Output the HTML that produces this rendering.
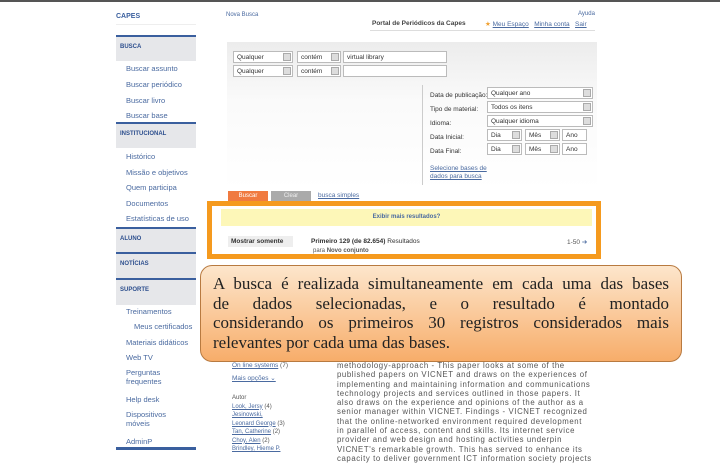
<!DOCTYPE html>
<html><head><meta charset="utf-8"><style>
*{margin:0;padding:0;box-sizing:border-box}
body{width:720px;height:450px;overflow:hidden;background:#fff;font-family:"Liberation Sans",sans-serif;font-size:7px;color:#555;position:relative}
.a{position:absolute;white-space:nowrap}
.hd{position:absolute;left:116px;width:80px;background:#e6e7ea;border-top:2px solid #3a5f9e;color:#2d4f8e;font-weight:bold;font-size:6px;padding:7px 4px}
.it{position:absolute;left:126px;color:#4a6aa0;font-size:7.5px}
.sep{position:absolute;left:116px;width:80px;border-top:1px solid #eee}
.sel{position:absolute;height:12px;border:1px solid #bbb;background:#fff;font-size:6.5px;padding:2px 3px;color:#333}
.sel i{position:absolute;right:1px;top:1px;width:8px;height:8px;background:#ddd;border:1px solid #aaa}
.lk{color:#4a6aa0;text-decoration:underline}
.cl div{text-align:justify;text-align-last:justify;height:19.5px;white-space:nowrap}
.cl div.l{text-align-last:left}
</style></head><body>
<div class="a" style="left:0;top:0;width:720px;height:2px;background:#555"></div>
<div class="a" style="left:116px;top:13px;color:#3a5f9e;font-weight:bold;font-size:7px">CAPES</div>
<div class="sep" style="top:24px"></div>
<div class="hd" style="top:35px;height:26px">BUSCA</div>
<div class="it" style="top:64px">Buscar assunto</div><div class="it" style="top:80px">Buscar periódico</div><div class="it" style="top:96px">Buscar livro</div><div class="it" style="top:111px">Buscar base</div>
<div class="hd" style="top:122px;height:26px">INSTITUCIONAL</div>
<div class="it" style="top:152px">Histórico</div><div class="it" style="top:168px">Missão e objetivos</div><div class="it" style="top:183px">Quem participa</div><div class="it" style="top:199px">Documentos</div><div class="it" style="top:214px">Estatísticas de uso</div>
<div class="hd" style="top:227px;height:25px">ALUNO</div>
<div class="hd" style="top:252px;height:26px">NOTÍCIAS</div>
<div class="hd" style="top:278px;height:27px">SUPORTE</div>
<div class="it" style="top:307px">Treinamentos</div><div class="it" style="top:322px;left:134px">Meus certificados</div><div class="it" style="top:338px">Materiais didáticos</div><div class="it" style="top:353px">Web TV</div><div class="it" style="top:368px;line-height:9px">Perguntas<br>frequentes</div><div class="it" style="top:395px">Help desk</div><div class="it" style="top:410px;line-height:9px">Dispositivos<br>móveis</div><div class="it" style="top:437px">AdminP</div>
<div class="a" style="left:116px;top:447px;width:80px;height:3px;background:#3a5f9e"></div>

<div class="a" style="left:226px;top:12px;color:#4a6aa0;font-size:6px">Nova Busca</div>
<div class="a" style="left:578px;top:11px;color:#4a6aa0;font-size:6px">Ayuda</div>
<div class="a" style="left:372px;top:20px;color:#444;font-weight:bold;font-size:6.5px">Portal de Periódicos da Capes</div>
<div class="a" style="left:485px;top:20px;font-size:6.5px"><span style="color:#f0a030">★</span> <span class="lk">Meu Espaço</span> &nbsp; <span class="lk">Minha conta</span> &nbsp; <span class="lk">Sair</span></div>
<div class="a" style="left:370px;top:30px;width:225px;border-top:1px solid #ddd"></div>
<div class="a" style="left:227px;top:42px;width:370px;height:148px;background:linear-gradient(#ececec,#fafafa 40%,#fff)"></div>
<div class="sel" style="left:233px;top:51px;width:60px">Qualquer<i></i></div>
<div class="sel" style="left:297px;top:51px;width:44px">contém<i></i></div>
<div class="sel" style="left:343px;top:51px;width:104px">virtual library</div>
<div class="sel" style="left:233px;top:65px;width:60px">Qualquer<i></i></div>
<div class="sel" style="left:297px;top:65px;width:44px">contém<i></i></div>
<div class="sel" style="left:343px;top:65px;width:104px"></div>
<div class="a" style="left:422px;top:85px;height:100px;border-left:1px solid #ccc"></div>
<div class="a" style="left:430px;top:89px;color:#333;font-size:6.5px;line-height:14px">Data de publicação:<br>Tipo de material:<br>Idioma:<br>Data Inicial:<br>Data Final:</div>
<div class="sel" style="left:487px;top:87px;width:106px">Qualquer ano<i></i></div>
<div class="sel" style="left:487px;top:101px;width:106px">Todos os itens<i></i></div>
<div class="sel" style="left:487px;top:115px;width:106px">Qualquer idioma<i></i></div>
<div class="sel" style="left:487px;top:129px;width:35px">Dia<i></i></div><div class="sel" style="left:525px;top:129px;width:35px">Mês<i></i></div><div class="sel" style="left:562px;top:129px;width:25px">Ano</div>
<div class="sel" style="left:487px;top:143px;width:35px">Dia<i></i></div><div class="sel" style="left:525px;top:143px;width:35px">Mês<i></i></div><div class="sel" style="left:562px;top:143px;width:25px">Ano</div>
<div class="a lk" style="left:430px;top:165px;font-size:6.5px;line-height:8px">Selecione bases de<br>dados para busca</div>
<div class="a" style="left:228px;top:191px;width:40px;height:10px;background:#f07a40;color:#fff;font-size:6px;text-align:center;line-height:10px">Buscar</div>
<div class="a" style="left:271px;top:191px;width:40px;height:10px;background:#aaa;color:#eee;font-size:6px;text-align:center;line-height:10px">Clear</div>
<div class="a lk" style="left:318px;top:192px;font-size:6.5px">busca simples</div>
<div class="a" style="left:207px;top:201px;width:394px;height:58px;border:5px solid #f59a1e"></div>
<div class="a" style="left:221px;top:209px;width:371px;height:17px;background:#fdf7b8;text-align:center;line-height:17px;color:#4a6aa0;font-weight:bold;font-size:6px">Exibir mais resultados?</div>
<div class="a" style="left:228px;top:236px;width:65px;height:11px;background:#eee;color:#333;font-weight:bold;font-size:6.5px;padding:2px 3px">Mostrar somente</div>
<div class="a" style="left:311px;top:238px;color:#333;font-size:6.5px"><b>Primeiro 129 (de 82.654)</b> Resultados</div>
<div class="a" style="left:313px;top:248px;font-size:6px">para <b>Novo conjunto</b></div>
<div class="a" style="left:567px;top:238px;font-size:6.5px">1-50 <span style="color:#4a6aa0">➔</span></div>

<div class="a" style="left:200px;top:265px;width:482px;height:97px;border:1px solid #b87a40;border-radius:12px;background:linear-gradient(#fde6cc,#f7ad6a);"></div>
<div class="a cl" style="left:213px;top:274px;width:456px;font-family:'Liberation Serif',serif;font-size:17px;line-height:19.5px;color:#222">
<div>A busca é realizada simultaneamente em cada uma das bases</div>
<div>de dados selecionadas, e o resultado é montado</div>
<div>considerando os primeiros 30 registros considerados mais</div>
<div class="l">relevantes por cada uma das bases.</div>
</div>

<div class="a" style="left:232px;top:362px;font-size:6.5px"><span class="lk">On line systems</span> (7)</div>
<div class="a lk" style="left:232px;top:374px;font-size:6.5px">Mais opções ⌄</div>
<div class="a" style="left:232px;top:394px;font-size:6px;line-height:8.5px">Autor<br><span class="lk">Look, Jersy</span> (4)<br><span class="lk">Jesinowski,</span><br><span class="lk">Leonard George</span> (3)<br><span class="lk">Tan, Catherine</span> (2)<br><span class="lk">Choy, Alen</span> (2)<br><span class="lk">Brindley, Hieme P.</span></div>
<div class="a" style="left:337px;top:361px;font-size:7.8px;letter-spacing:0.6px;line-height:9.3px;color:#555">methodology-approach - This paper looks at some of the<br>published papers on VICNET and draws on the experiences of<br>implementing and maintaining information and communications<br>technology projects and services outlined in those papers. It<br>also draws on the experience and opinions of the author as a<br>senior manager within VICNET. Findings - VICNET recognized<br>that the online-networked environment required development<br>in parallel of access, content and skills. Its internet service<br>provider and web design and hosting activities underpin<br>VICNET's remarkable growth. This has served to enhance its<br>capacity to deliver government ICT information society projects</div>
</body></html>
